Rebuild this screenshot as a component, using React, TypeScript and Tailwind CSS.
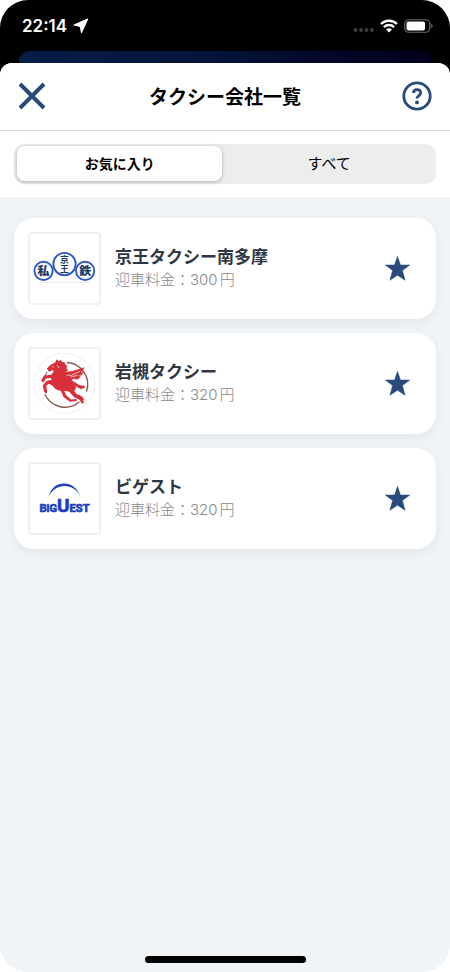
import { useState } from "react";
import type { ReactNode } from "react";

type Company = { name: string; fee: number; logo: ReactNode };

function KeioLogo() {
  return (
    <svg viewBox="32 28 204 204" className="size-full" role="img" aria-label="京王 私鉄">
      <path d="M58 171H212" stroke="#ececef" strokeWidth="3" />
      <g fill="#fff" stroke="#2f57c4" strokeWidth="5.500">
        <circle cx="72" cy="137" r="27" />
        <circle cx="195" cy="137" r="27" />
        <circle cx="134" cy="117" r="33" />
      </g>
      <g fill="#1b3a66" textAnchor="middle" fontWeight="900" fontSize="35">
        <text x="72" y="150">私</text>
        <text x="195" y="150">鉄</text>
        <text fontSize="26" fontWeight="700">
          <tspan x="134" y="115">京</tspan>
          <tspan x="134" y="139">王</tspan>
        </text>
      </g>
    </svg>
  );
}

function HorseLogo() {
  return (
    <svg viewBox="32 28 204 204" className="size-full" aria-hidden="true">
      <circle cx="134" cy="129" r="89" fill="none" stroke="#e6e6e6" strokeWidth="2" />
      <g fill="none" stroke="#8a5a50" strokeWidth="4">
        <path d="M141 68A65 65 0 0 1 199 154" />
        <path d="M76 162A65 65 0 0 0 178 184" />
        <path d="M72 121A65 65 0 0 1 83 96" strokeWidth="3" />
      </g>
      <g fill="#d8303a">
        <path d="M82 86L92 75L106 68L111 58L117 64L123 60L126 66L134 67L138 75L143 80L139 84L145 91L138 95L141 103L154 119L165 128L168 143L163 153L174 167L184 173L192 187L186 190L178 178L162 170L147 154L133 152L139 165L153 177L169 176L170 182L150 184L131 170L124 153L108 147L98 136L88 131L80 137L83 155L79 160L73 153L70 135L82 122L96 120L94 114L79 115L72 127L65 122L73 106L95 104L102 95L99 90L88 95Z" />
        <path d="M132 104L140 95L158 93L193 82L188 93L181 97L192 97L183 106L174 107L183 110L172 118L160 116L150 123Z" />
        <path d="M164 124Q174 137 193 137L194 143L182 146Q170 143 164 134Z" />
        <path d="M165 160L178 164L188 171L193 180L186 179L179 172L165 170Z" />
      </g>
      <g fill="none" stroke="#fff" strokeWidth="2">
        <path d="M140 105L154 106L180 94M152 111L172 106M112 76L118 84" />
        <circle cx="100" cy="81" r="1" />
      </g>
    </svg>
  );
}

function BiguestLogo() {
  return (
    <svg viewBox="32 28 204 204" className="size-full" role="img" aria-label="BiGUEST">
      <path d="M87 125C98 73 166 73 180 124C164 84 106 82 87 125Z" fill="#1f3fc0" />
      <text
        x="134"
        y="171"
        textAnchor="middle"
        fill="#1f3fc0"
        stroke="#1f3fc0"
        strokeWidth="2"
        fontWeight="700"
        fontFamily="Roboto, sans-serif"
        fontSize="33"
      >
        BiG<tspan fontSize="56">U</tspan>EST
      </text>
    </svg>
  );
}

const companies: Company[] = [
  { name: "京王タクシー南多摩", fee: 300, logo: <KeioLogo /> },
  { name: "岩槻タクシー", fee: 320, logo: <HorseLogo /> },
  { name: "ビゲスト", fee: 320, logo: <BiguestLogo /> },
];

function StatusBar() {
  return (
    <div className="flex h-[51px] items-center justify-between pr-[17px] pl-[22px] text-white">
      <div className="flex items-center gap-[6px]">
        <span className="text-[17px] leading-6 font-semibold">22:14</span>
        <svg width="16" height="16" viewBox="0 0 15 15" fill="currentColor" stroke="currentColor" strokeLinejoin="round" aria-hidden="true">
          <path d="M1 6.500L13.800 1L8 13.700L6.800 8Z" />
        </svg>
      </div>
      <div className="flex items-center gap-[6px]">
        <svg width="21" height="16" viewBox="0 0 21 16" fill="#3d3d3d" aria-hidden="true">
          <circle cx="2.500" cy="12" r="2" />
          <circle cx="8" cy="12" r="2" />
          <circle cx="13.500" cy="12" r="2" />
          <circle cx="19" cy="12" r="2" />
        </svg>
        <svg width="18" height="14" viewBox="0 0 18 14" fill="none" stroke="currentColor" aria-hidden="true">
          <path d="M1 5a11.500 11.500 0 0 1 16 0M3.900 8.100a7.300 7.300 0 0 1 10.200 0" strokeWidth="2.300" />
          <path d="M9 13.500L6 10.400a4.200 4.200 0 0 1 6 0Z" fill="currentColor" stroke="none" />
        </svg>
        <svg width="29" height="14" viewBox="0 0 29 14" aria-hidden="true">
          <rect x=".75" y=".75" width="25" height="12.500" rx="4" fill="none" stroke="#6b6b6b" strokeWidth="1.200" />
          <rect x="2.500" y="2.500" width="18.500" height="9" rx="2" fill="#fff" />
          <path d="M27.200 4.800q1.500.7 1.500 2.200t-1.500 2.200Z" fill="#6b6b6b" />
        </svg>
      </div>
    </div>
  );
}

function CompanyCard({ name, fee, logo }: Company) {
  const [favorite, setFavorite] = useState(true);
  return (
    <li className="flex items-center rounded-[20px] bg-white py-[14px] pr-[26px] pl-[14px] shadow-[0_4px_12px_rgba(40,40,50,0.06)]">
      <div className="size-[73px] shrink-0 rounded border-2 border-[#f0f0f0]">{logo}</div>
      <div className="ml-[14px] min-w-0 flex-1 pb-[2px]">
        <h2 className="text-[17px] leading-6 font-bold text-[#2f3742]">{name}</h2>
        <p className="text-[15px] leading-[22px] font-light text-[#85878c]">
          迎車料金：{fee}
          <span className="ml-[2px]">円</span>
        </p>
      </div>
      <button
        type="button"
        aria-label={`${name}をお気に入り`}
        aria-pressed={favorite}
        onClick={() => setFavorite(!favorite)}
        className="text-[#284a7c]"
      >
        <svg width="25" height="25" viewBox="0 0 24 24" fill={favorite ? "currentColor" : "none"} stroke="currentColor" strokeWidth="0.500">
          <path d="M12 .3L14.800 8.700H23.700L16.700 14L19.300 23.300L12 18.500L4.700 23.300L7.300 14L.3 8.700H9.200Z" />
        </svg>
      </button>
    </li>
  );
}

export default function App() {
  const [tab, setTab] = useState("favorites");
  const tabClass = (active: boolean) =>
    active
      ? "h-[35px] rounded-lg bg-white text-[14px] font-bold shadow-[0_1px_4px_rgba(0,0,0,0.25)]"
      : "h-[35px] rounded-lg text-[15px]";

  return (
    <div className="min-h-screen bg-white font-[Inter,'Noto_Sans_CJK_JP',sans-serif]">
      <div className="flex min-h-screen flex-col overflow-hidden rounded-[28px] bg-linear-to-b from-black from-50% to-[#f0f4f7] to-50%">
        <StatusBar />
        <div className="mx-[19px] h-3 rounded-t-[10px] bg-linear-to-r from-[#071d48] via-[#031338] to-[#02001c]" />
        <div className="flex flex-1 flex-col overflow-hidden rounded-t-xl bg-[#f0f4f7]">
          <header className="flex h-[68px] items-center justify-between border-b border-[#d8d8d8] bg-white px-[18px] pb-px">
            <button type="button" aria-label="閉じる" className="text-[#284a7c]">
              <svg width="30" height="30" viewBox="0 0 30 30" fill="none" stroke="currentColor" strokeWidth="4">
                <path d="M2 3L26 27M26 3L2 27" />
              </svg>
            </button>
            <h1 className="pt-1 text-[19px] leading-7 font-bold text-black">タクシー会社一覧</h1>
            <button type="button" aria-label="ヘルプ" className="text-[#284a7c]">
              <svg width="30" height="30" viewBox="0 0 30 30" fill="none" stroke="currentColor" strokeWidth="2.800">
                <circle cx="15" cy="15" r="13.200" />
                <path d="M11.500 12.100c0-4.700 7.200-4.600 7.200-.3 0 2.800-3.700 2.800-3.700 5.600" strokeWidth="2.800" />
                <circle cx="15" cy="21.400" r="1.900" fill="currentColor" stroke="none" />
              </svg>
            </button>
          </header>
          <div className="bg-white px-[14px] py-[13px]">
            <div role="tablist" className="grid grid-cols-[49fr_51fr] rounded-[10px] bg-[#ededed] pt-[2px] pb-[3px] pl-[3px] leading-5 text-black">
              <button type="button" role="tab" aria-selected={tab === "favorites"} onClick={() => setTab("favorites")} className={tabClass(tab === "favorites")}>
                お気に入り
              </button>
              <button type="button" role="tab" aria-selected={tab === "all"} onClick={() => setTab("all")} className={tabClass(tab === "all")}>
                すべて
              </button>
            </div>
          </div>
          <ul className="flex flex-col gap-[14px] px-[14px] py-[21px]">
            {companies.map((company) => (
              <CompanyCard key={company.name} {...company} />
            ))}
          </ul>
          <div className="mx-auto mt-auto mb-[9px] h-[7px] w-[161px] rounded-full bg-black" />
        </div>
      </div>
    </div>
  );
}
